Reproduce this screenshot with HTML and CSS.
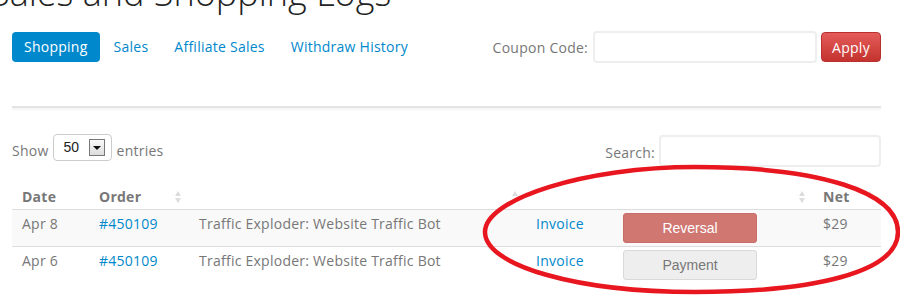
FILE: index.html
```html
<!DOCTYPE html>
<html lang="en">
<head>
    <meta charset="UTF-8">
    <title>Sales and Shopping Logs</title>
    <link rel="stylesheet" href="styles.css">
</head>
<body>
    <div class="page">
        <h1 class="title">Sales and Shopping Logs</h1>

        <!-- tabs + coupon -->
        <div class="toolbar">
            <ul class="pills">
                <li><a class="active" href="javascript:;">Shopping</a></li>
                <li><a href="javascript:;">Sales</a></li>
                <li><a href="javascript:;">Affiliate Sales</a></li>
                <li><a href="javascript:;">Withdraw History</a></li>
            </ul>
            <form class="coupon">
                <label>Coupon Code:</label>
                <input type="text" class="coupon-input">
                <button type="button" class="btn-apply">Apply</button>
            </form>
        </div>

        <div class="divider"></div>

        <!-- datatable controls -->
        <div class="controls">
            <div class="length">
                <span class="lbl">Show</span>
                <div class="select">
                    <span class="select-val">50</span>
                    <span class="select-arrow"><i></i></span>
                </div>
                <span class="lbl">entries</span>
            </div>
            <div class="search">
                <span class="lbl-search">Search:</span>
                <input type="text" class="search-input">
            </div>
        </div>

        <table class="logs">
            <colgroup>
                <col style="width:77px">
                <col style="width:100px">
                <col style="width:337px">
                <col style="width:87px">
                <col style="width:200px">
                <col style="width:68px">
            </colgroup>
            <thead>
                <tr>
                    <th><div class="th">Date</div></th>
                    <th><div class="th">Order<span class="sort both"></span></div></th>
                    <th><div class="th"><span class="sort up"></span></div></th>
                    <th><div class="th"></div></th>
                    <th><div class="th"><span class="sort both"></span></div></th>
                    <th><div class="th">Net<span class="sort up"></span></div></th>
                </tr>
            </thead>
            <tbody>
                <tr class="odd">
                    <td>Apr 8</td>
                    <td><a href="javascript:;">#450109</a></td>
                    <td>Traffic Exploder: Website Traffic Bot</td>
                    <td><a href="javascript:;">Invoice</a></td>
                    <td><span class="tag tag-reversal">Reversal</span></td>
                    <td>$29</td>
                </tr>
                <tr>
                    <td>Apr 6</td>
                    <td><a href="javascript:;">#450109</a></td>
                    <td>Traffic Exploder: Website Traffic Bot</td>
                    <td><a href="javascript:;">Invoice</a></td>
                    <td><span class="tag tag-payment">Payment</span></td>
                    <td>$29</td>
                </tr>
            </tbody>
        </table>
    </div>

    <!-- hand drawn red circle -->
    <svg class="mark" width="900" height="297" viewBox="0 0 900 297">
        <path d="M485,232 C485,199 585,167 695,167 C820,167 898,192 898,232 C898,272 815,292 695,292 C578,292 485,266 485,232 Z" fill="none" stroke="#e8161e" stroke-width="4.5"/>
    </svg>
</body>
</html>
```

FILE: styles.css
```css
*{
    margin: 0;
    padding: 0;
    box-sizing: border-box;
}
body{
    font-family: "Open Sans", "Liberation Sans", sans-serif;
    font-size: 14px;
    letter-spacing: 0.25px;
    color: #777;
    background: #fff;
    overflow: hidden;
}
a{
    color: #0088cc;
    text-decoration: none;
}
.page{
    width: 881px;
    padding-left: 12px;
}
/*标题被截掉了一半*/
.title{
    font-size: 36px;
    font-weight: 300;
    line-height: 40px;
    letter-spacing: 0;
    color: #222;
    margin: -27px 0 0 -22px;
    white-space: nowrap;
}
.toolbar{
    display: flex;
    justify-content: space-between;
    align-items: center;
    margin-top: 18px;
    height: 32px;
}
.pills{
    list-style: none;
    display: flex;
    gap: 2px;
}
.pills a{
    display: block;
    height: 30px;
    line-height: 30px;
    padding: 0 12px;
    border-radius: 4px;
}
.pills a.active{
    background-color: #0088cc;
    color: #fff;
}
.coupon{
    display: flex;
    align-items: center;
}
.coupon label{
    color: #777;
    margin-right: 5px;
}
.coupon-input,
.search-input{
    width: 224px;
    height: 32px;
    border: 2px solid #eee;
    border-radius: 4px;
    background: #fff;
}
.btn-apply{
    width: 60px;
    height: 30px;
    margin-left: 4px;
    border: 1px solid #b83030;
    border-radius: 4px;
    background: linear-gradient(#e45c5a, #c4332e);
    color: #fff;
    font-family: "Open Sans", sans-serif;
    font-size: 14px;
    letter-spacing: 0.25px;
}
.divider{
    margin-top: 43px;
    height: 2px;
    background: #e3e3e3;
    box-shadow: 0 2px 2px #f2f2f2;
}
.controls{
    display: flex;
    justify-content: space-between;
    align-items: flex-start;
    margin-top: 26px;
    height: 33px;
}
.length{
    display: flex;
    align-items: flex-start;
}
.lbl{
    line-height: 20px;
    margin-top: 7px;
}
.select{
    display: flex;
    align-items: flex-start;
    width: 59px;
    height: 27px;
    margin: 0 5px 0 4px;
    border: 1px solid #ccc;
    border-radius: 4px;
}
.select-val{
    font-family: "Liberation Sans", Arial, sans-serif;
    font-size: 14px;
    letter-spacing: 0;
    color: #222;
    margin: 4px 0 0 10px;
}
.select-arrow{
    display: flex;
    align-items: center;
    justify-content: center;
    width: 16px;
    height: 17px;
    margin: 4px 0 0 10px;
    border: 1px solid #777;
    background: linear-gradient(#fafafa, #dcdcdc);
}
.select-arrow i{
    border-left: 4px solid transparent;
    border-right: 4px solid transparent;
    border-top: 4px solid #111;
}
.search{
    display: flex;
    align-items: flex-start;
}
.lbl-search{
    line-height: 20px;
    margin: 9px 4px 0 0;
}
.search-input{
    width: 222px;
    margin-top: 1px;
}
.logs{
    margin-top: 17px;
    width: 869px;
    border-collapse: collapse;
    table-layout: fixed;
}
.logs th{
    text-align: left;
    font-weight: bold;
    color: #777;
    padding: 2px 7px 2px 10px;
    border-bottom: 1px solid #ddd;
}
.th{
    display: flex;
    align-items: center;
    height: 21px;
    line-height: 21px;
}
.sort{
    margin-left: auto;
    width: 7px;
    height: 12px;
    position: relative;
}
.sort::before,
.sort::after{
    content: "";
    position: absolute;
    left: 0;
    border-left: 3.5px solid transparent;
    border-right: 3.5px solid transparent;
}
.sort::before{
    top: 0;
    border-bottom: 5px solid #ddd;
}
.sort.both::after{
    bottom: 0;
    border-top: 5px solid #ddd;
}
.logs td{
    padding: 3px 10px;
    height: 36px;
    line-height: 21px;
    vertical-align: top;
    white-space: nowrap;
}
.logs tr.odd td{
    background-color: #f9f9f9;
}
.logs tbody tr + tr td{
    border-top: 1px solid #ddd;
}
.tag{
    display: block;
    width: 134px;
    height: 30px;
    line-height: 28px;
    text-align: center;
    border-radius: 3px;
    font-family: "Liberation Sans", Arial, sans-serif;
    font-size: 14px;
    letter-spacing: 0;
}
.tag-reversal{
    background-color: #d07772;
    border: 1px solid #c86c67;
    color: #fff;
}
.tag-payment{
    background-color: #eee;
    border: 1px solid #d9d9d9;
    color: #777;
}
.mark{
    position: absolute;
    left: 0;
    top: 0;
    pointer-events: none;
}
```
